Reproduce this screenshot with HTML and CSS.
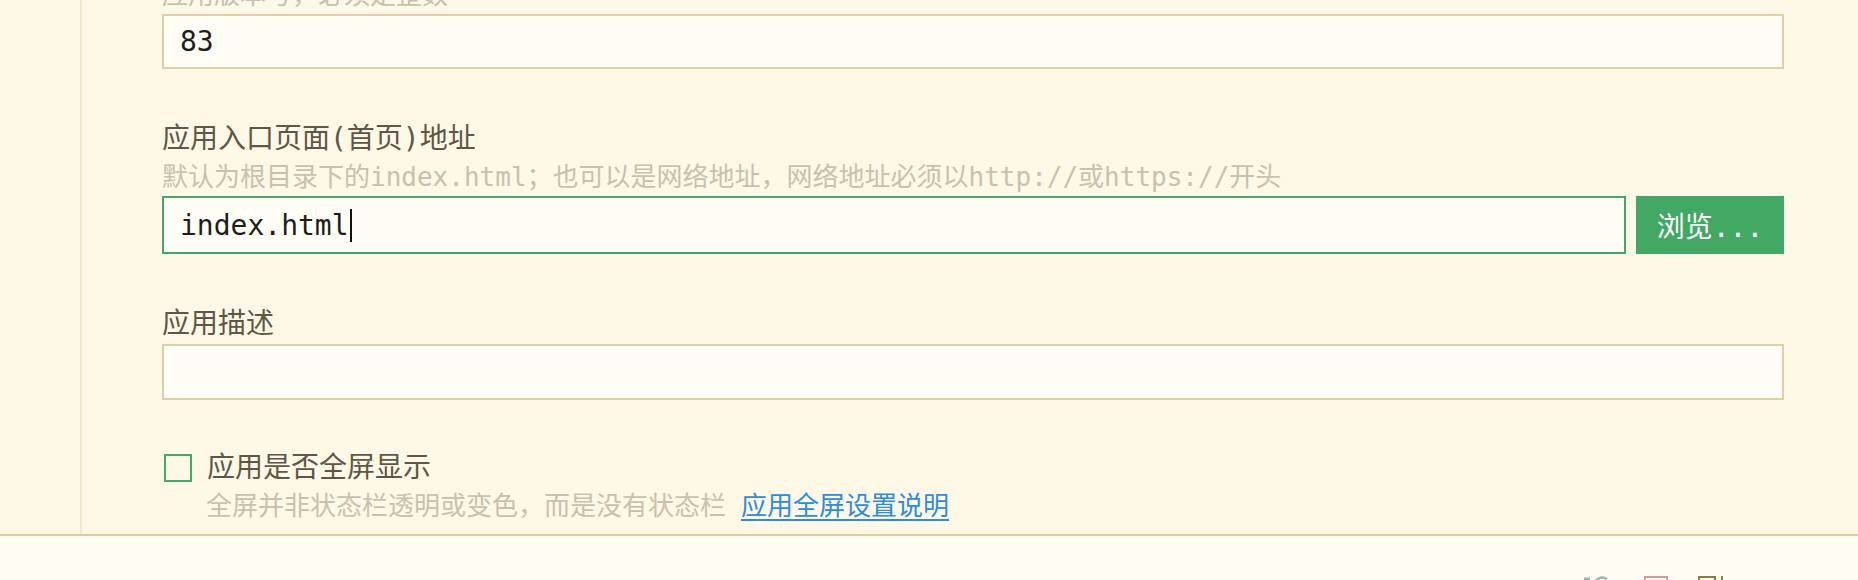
FILE: index.html
```html
<!DOCTYPE html>
<html lang="zh-CN">
<head>
<meta charset="utf-8">
<title>应用设置</title>
<link rel="stylesheet" href="styles.css">
</head>
<body>
<div class="page">
  <div class="main">
    <div class="side"></div>
    <div class="form">
      <div class="field field-first">
        <div class="hint">应用版本号，必须是整数</div>
        <div class="input"><span class="value">83</span></div>
      </div>

      <div class="field">
        <div class="label">应用入口页面(首页)地址</div>
        <div class="hint">默认为根目录下的index.html；也可以是网络地址，网络地址必须以http://或https://开头</div>
        <div class="input-row">
          <div class="input input-focus"><span class="value">index.html</span><span class="caret"></span></div>
          <button class="btn">浏览...</button>
        </div>
      </div>

      <div class="field field-desc">
        <div class="label">应用描述</div>
        <div class="input"></div>
      </div>

      <div class="check-field">
        <div class="check-row">
          <span class="checkbox"></span>
          <span class="check-label">应用是否全屏显示</span>
        </div>
        <div class="check-hint">全屏并非状态栏透明或变色，而是没有状态栏<a class="link" href="#">应用全屏设置说明</a></div>
      </div>
    </div>
  </div>
  <div class="footer">
    <div class="footer-icons">
      <svg class="icon icon-undo" width="30" height="12" viewBox="0 0 30 12">
        <path d="M0 3 H6" stroke="#9db7a6" stroke-width="3" fill="none"/>
        <path d="M11 6 Q16 -1 23 3" stroke="#9db7a6" stroke-width="2.5" fill="none"/>
      </svg>
      <svg class="icon icon-square" width="24" height="12" viewBox="0 0 24 12">
        <rect x="1" y="1" width="22" height="20" stroke="#d59c92" stroke-width="2" fill="none"/>
      </svg>
      <svg class="icon icon-panel" width="28" height="12" viewBox="0 0 28 12">
        <rect x="1" y="1" width="16" height="20" stroke="#8f7d3e" stroke-width="2" fill="none"/>
        <path d="M24 0 V12" stroke="#8f7d3e" stroke-width="2"/>
      </svg>
    </div>
  </div>
</div>
</body>
</html>
```

FILE: styles.css
```css
html, body {
  margin: 0;
  padding: 0;
}

body {
  background: #fef8e6;
  font-family: "DejaVu Sans Mono", "Noto Sans CJK SC", monospace;
  overflow: hidden;
}

.page {
  width: 1858px;
  height: 580px;
  display: flex;
  flex-direction: column;
  overflow: hidden;
}

.main {
  height: 534px;
  flex: none;
  display: flex;
  overflow: hidden;
}

.side {
  width: 80px;
  flex: none;
  border-right: 2px solid #f2e8cc;
}

.form {
  flex: 1;
  padding: 0 74px 0 80px;
  display: flex;
  flex-direction: column;
}

.field {
  display: flex;
  flex-direction: column;
  margin-bottom: 50px;
}

.field-first {
  margin-top: -23px;
}

.field-desc {
  margin-bottom: 48px;
}

.label {
  font-size: 28px;
  line-height: 40px;
  height: 40px;
  color: #5e5646;
  white-space: nowrap;
}

.hint {
  font-size: 26px;
  line-height: 36px;
  height: 36px;
  color: #c8c1ad;
  white-space: nowrap;
  margin-bottom: 1px;
}

.input {
  box-sizing: border-box;
  height: 56px;
  border: 2px solid #ddd0a8;
  background: #fffdf6;
  display: flex;
  align-items: center;
  padding: 0 16px;
  font-size: 28px;
  color: #1d1d1d;
}

.field-first .input {
  height: 55px;
}

.input-row {
  display: flex;
  gap: 10px;
  height: 58px;
}

.input-row .input {
  flex: 1;
  height: 58px;
}

.input-focus {
  border-color: #43a865;
}

.caret {
  display: inline-block;
  width: 2px;
  height: 33px;
  background: #111;
  margin-left: 1px;
}

.btn {
  box-sizing: border-box;
  width: 148px;
  height: 58px;
  border: none;
  background: #43a864;
  color: #ffffff;
  font-family: "DejaVu Sans Mono", "Noto Sans CJK SC", monospace;
  font-size: 28px;
  padding: 0;
}

.check-field {
  display: flex;
  flex-direction: column;
}

.check-row {
  display: flex;
  align-items: center;
  height: 40px;
}

.checkbox {
  box-sizing: border-box;
  width: 28px;
  height: 28px;
  border: 2px solid #44a866;
  margin-left: 2px;
  flex: none;
}

.check-label {
  margin-left: 15px;
  font-size: 28px;
  line-height: 40px;
  color: #5e5646;
}

.check-hint {
  padding-left: 44px;
  font-size: 26px;
  line-height: 36px;
  color: #c8c1ad;
  white-space: nowrap;
}

.link {
  margin-left: 15px;
  color: #2d8ce2;
  text-decoration: underline;
  text-underline-offset: 4px;
}

.footer {
  flex: 1;
  border-top: 2px solid #d9cc9e;
  background: #fffcf4;
  overflow: hidden;
}

.footer-icons {
  display: flex;
  justify-content: flex-end;
  align-items: flex-start;
  padding: 40px 132px 0 0;
  gap: 30px;
}

.icon {
  display: block;
  flex: none;
}
```
